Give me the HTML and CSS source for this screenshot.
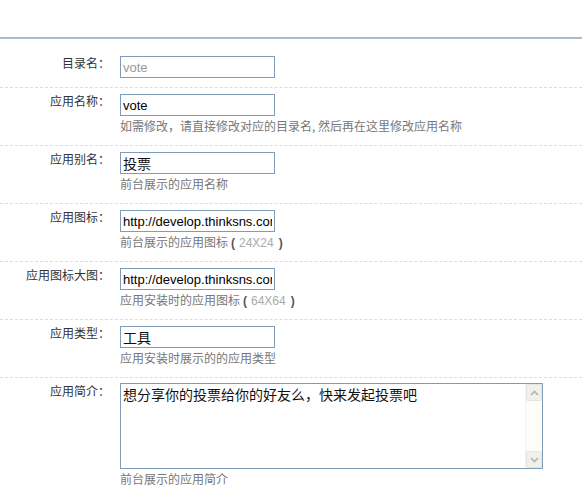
FILE: index.html
```html
<!DOCTYPE html>
<html lang="zh-CN">
<head>
<meta charset="UTF-8">
<title>应用信息</title>
<link rel="stylesheet" href="styles.css">
</head>
<body>

<div class="page-top"></div>

<ul class="form-list">
    <li class="form-row">
        <label class="form-label">目录名：</label>
        <div class="form-field">
            <input type="text" class="text-input is-readonly" value="vote" readonly>
        </div>
    </li>
    <li class="form-row">
        <label class="form-label">应用名称：</label>
        <div class="form-field">
            <input type="text" class="text-input" value="vote">
            <p class="hint">如需修改，请直接修改对应的目录名, 然后再在这里修改应用名称</p>
        </div>
    </li>
    <li class="form-row">
        <label class="form-label">应用别名：</label>
        <div class="form-field">
            <input type="text" class="text-input cjk" value="投票">
            <p class="hint">前台展示的应用名称</p>
        </div>
    </li>
    <li class="form-row">
        <label class="form-label">应用图标：</label>
        <div class="form-field">
            <input type="text" class="text-input" value="http://develop.thinksns.com/apps/vote/Appinfo/ico_app.gif">
            <p class="hint">前台展示的应用图标<b class="paren">(</b><span class="size">24X24</span><b class="paren">)</b></p>
        </div>
    </li>
    <li class="form-row">
        <label class="form-label">应用图标大图：</label>
        <div class="form-field">
            <input type="text" class="text-input" value="http://develop.thinksns.com/apps/vote/Appinfo/ico_app_large.gif">
            <p class="hint">应用安装时的应用图标<b class="paren">(</b><span class="size">64X64</span><b class="paren">)</b></p>
        </div>
    </li>
    <li class="form-row">
        <label class="form-label">应用类型：</label>
        <div class="form-field">
            <input type="text" class="text-input cjk" value="工具">
            <p class="hint">应用安装时展示的的应用类型</p>
        </div>
    </li>
    <li class="form-row">
        <label class="form-label">应用简介：</label>
        <div class="form-field">
            <div class="area-box">
                <textarea class="area-input">想分享你的投票给你的好友么，快来发起投票吧</textarea>
                <div class="scrollbar">
                    <span class="scroll-btn">
                        <svg width="9" height="6" viewBox="0 0 9 6"><path d="M1 5 L4.5 1.5 L8 5" fill="none" stroke="#b4b4a8" stroke-width="1.6"/></svg>
                    </span>
                    <span class="scroll-btn">
                        <svg width="9" height="6" viewBox="0 0 9 6"><path d="M1 1 L4.5 4.5 L8 1" fill="none" stroke="#b4b4a8" stroke-width="1.6"/></svg>
                    </span>
                </div>
            </div>
            <p class="hint">前台展示的应用简介</p>
        </div>
    </li>
</ul>

</body>
</html>
```

FILE: styles.css
```css
body {
    margin: 0;
    background: #fff;
    font-family: "Noto Sans CJK SC", sans-serif;
    font-size: 12px;
    color: #333;
}

.page-top {
    height: 37px;
    border-bottom: 2px solid #a9bcc7;
}

.form-list {
    list-style: none;
    margin: 11px 0 0;
    padding: 0;
}

.form-row {
    display: flex;
    padding: 6px 0 9px;
    border-top: 1px dashed #dcdcdc;
}

.form-row:first-child {
    border-top: none;
}

.form-label {
    width: 110px;
    flex-shrink: 0;
    text-align: right;
    line-height: 14px;
    color: #333;
}

.form-field {
    margin-left: 10px;
}

.text-input {
    display: block;
    box-sizing: border-box;
    width: 155px;
    height: 22px;
    margin: 0;
    padding: 0 2px;
    border: 1px solid #7f9db9;
    font-family: "Liberation Sans", Arial, sans-serif;
    font-size: 13px;
    color: #000;
    outline: none;
}

.text-input.cjk {
    font-family: "Noto Sans CJK SC", sans-serif;
    font-size: 14px;
    color: #111;
}

.text-input.is-readonly {
    color: #999;
}

.hint {
    height: 20px;
    margin: 0;
    line-height: 20px;
    color: #777;
    white-space: nowrap;
    overflow: hidden;
}

.hint .paren {
    margin: 0 4px 0 3px;
    font-family: "Liberation Sans", Arial, sans-serif;
    color: #555;
}

.hint .paren:last-child {
    margin: 0 0 0 5px;
}

.hint .size {
    font-family: "Liberation Sans", Arial, sans-serif;
    color: #aaa;
}

.area-box {
    display: flex;
    box-sizing: border-box;
    width: 423px;
    height: 86px;
    margin-top: -1px;
    border: 1px solid #7f9db9;
}

.area-input {
    flex: 1;
    margin: 0;
    padding: 1px 2px;
    border: none;
    resize: none;
    outline: none;
    overflow: hidden;
    font-family: "Noto Sans CJK SC", sans-serif;
    font-size: 14px;
    line-height: 18px;
    color: #111;
}

.scrollbar {
    width: 16px;
    display: flex;
    flex-direction: column;
    justify-content: space-between;
    background: #fcfcf9;
    border-left: 1px solid #f4f4ef;
}

.scroll-btn {
    display: flex;
    align-items: center;
    justify-content: center;
    height: 15px;
    background: #f1f0ea;
    border: 1px solid #e6e4dc;
    border-radius: 2px;
}
```
